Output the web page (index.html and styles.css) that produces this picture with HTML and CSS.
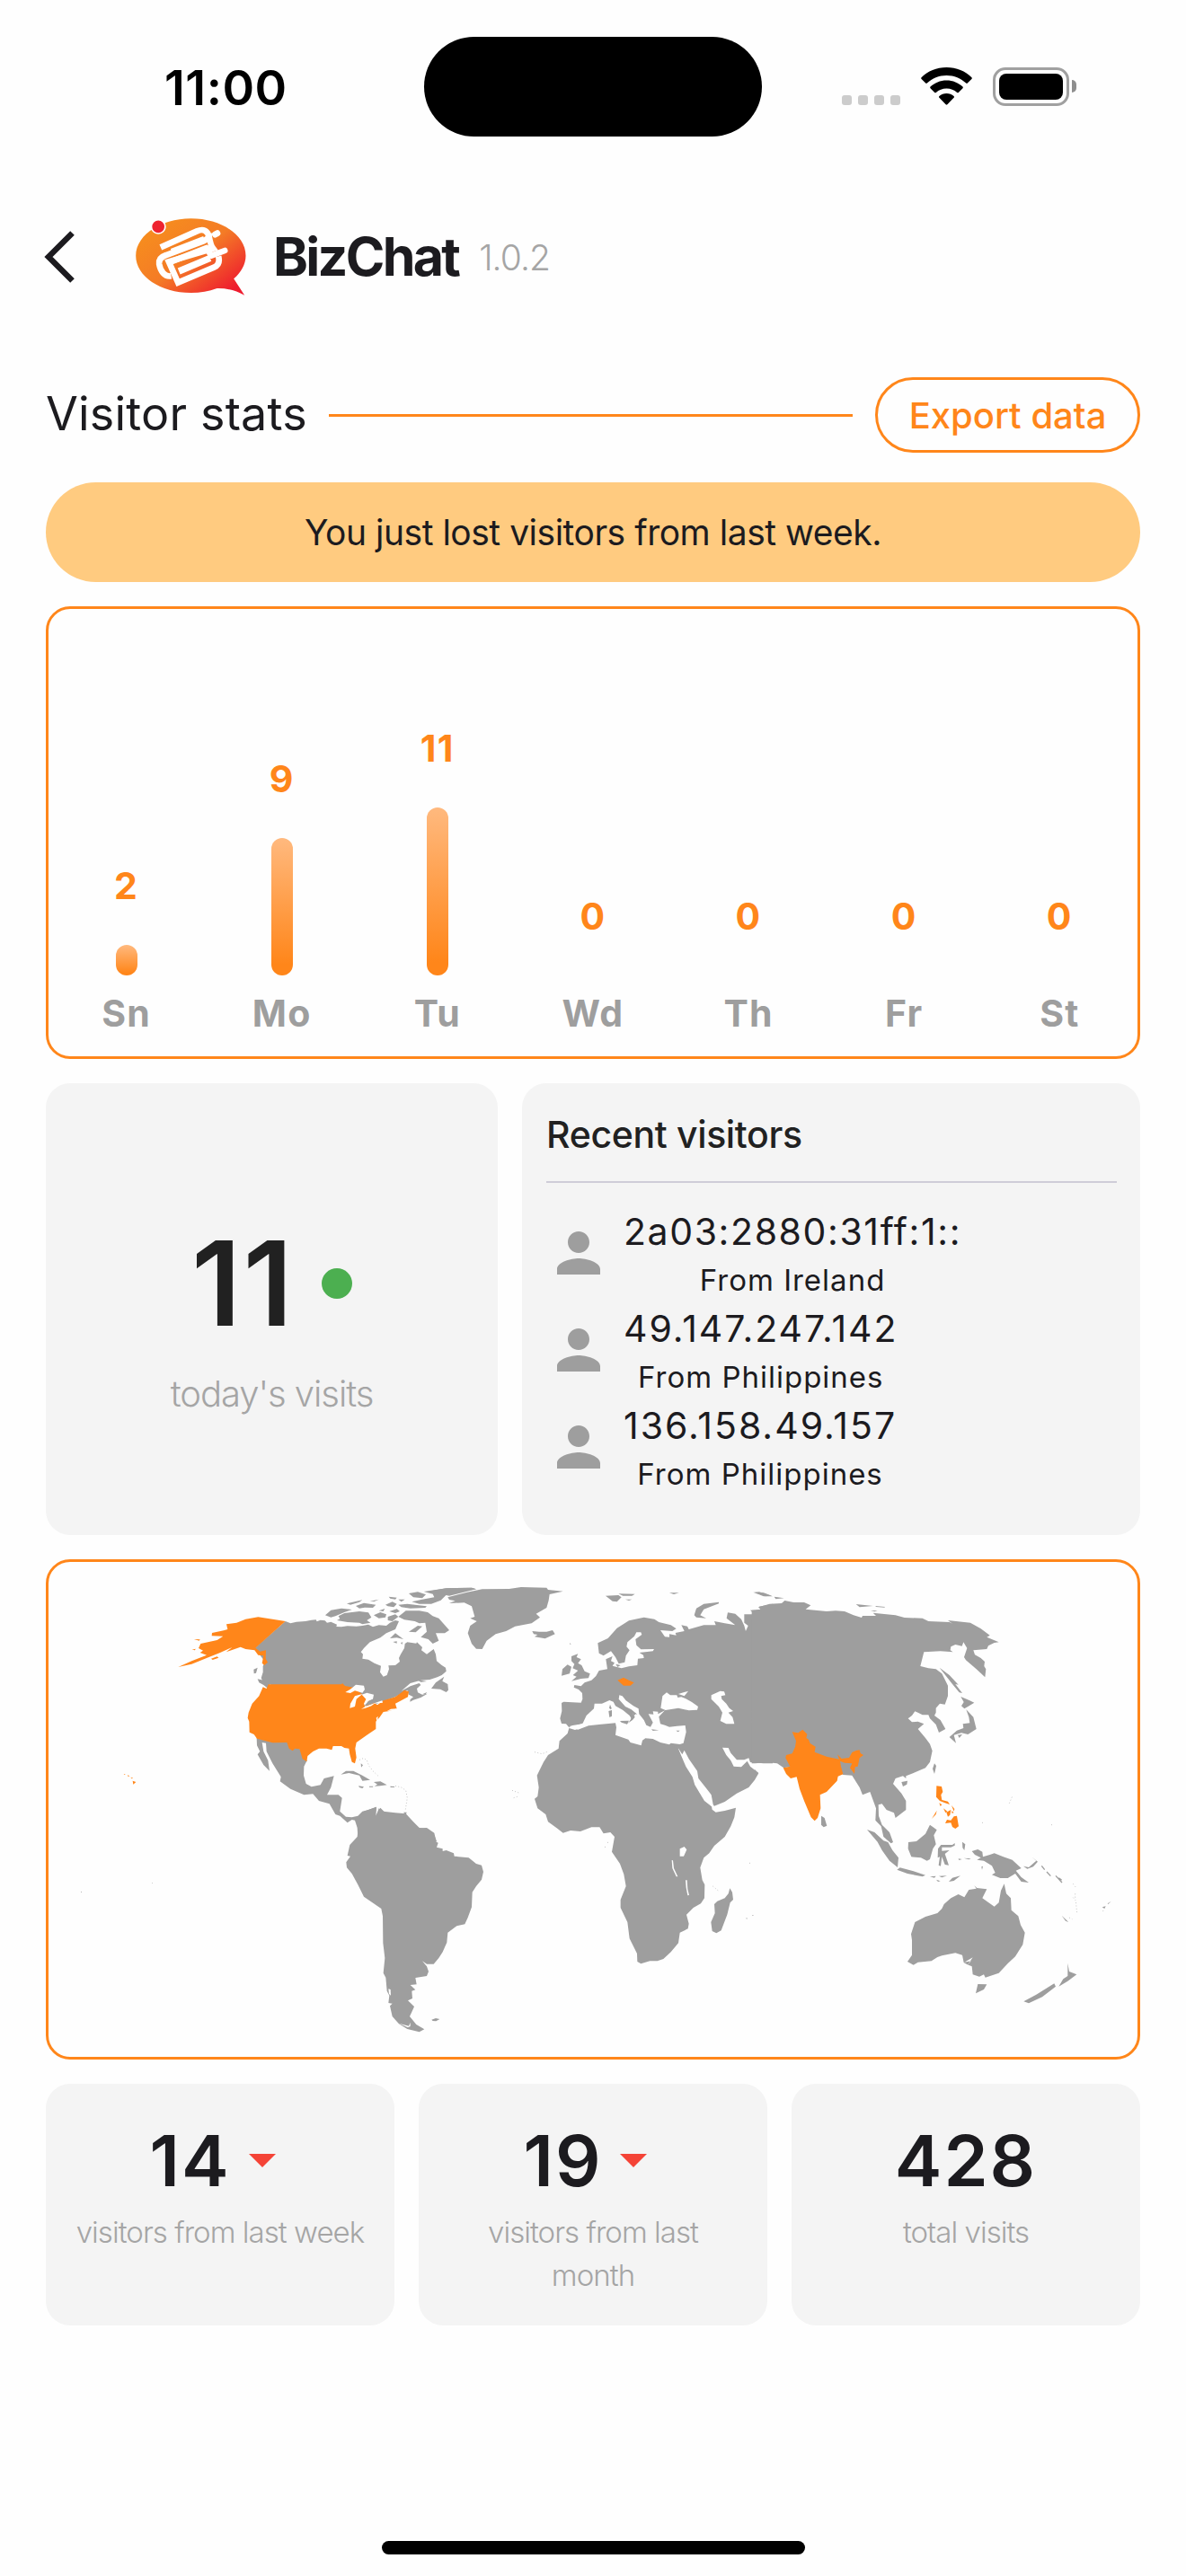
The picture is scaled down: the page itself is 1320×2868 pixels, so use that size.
FILE: index.html
```html
<!DOCTYPE html>
<html lang="en">
<head>
<meta charset="utf-8">
<title>BizChat – Visitor stats</title>
<link rel="stylesheet" href="styles.css">
</head>
<body>
<div class="status-bar">
  <div class="time">11:00</div>
  <div class="island"></div>
  <div class="indicators">
    <div class="signal"><i></i><i></i><i></i><i></i></div>
    <svg class="wifi" viewBox="0 0 57 42"><path d="M28.500 0C39.500 0 49.500 4.200 56.500 11.300Q57.200 12.200 56.400 13L51.800 17.600Q51 18.300 50.200 17.600C44.500 12.200 37 9 28.500 9S12.500 12.200 6.800 17.600Q6 18.300 5.200 17.600L.6 13Q-.2 12.200.5 11.300C7.500 4.200 17.500 0 28.500 0Z"/><path d="M28.500 14.500C35.500 14.500 41.800 17.200 46.500 21.600Q47.300 22.400 46.500 23.200L41.800 27.900Q41 28.600 40.200 27.900C37 25 33 23.400 28.500 23.400S20 25 16.800 27.900Q16 28.600 15.200 27.900L10.500 23.200Q9.700 22.400 10.500 21.600C15.200 17.200 21.500 14.500 28.500 14.500Z"/><path d="M28.500 29C31.600 29 34.500 30.200 36.600 32.100Q37.400 32.900 36.600 33.700L29.400 41.300Q28.500 42.200 27.600 41.300L20.400 33.700Q19.600 32.900 20.400 32.100C22.500 30.200 25.400 29 28.500 29Z"/></svg>
    <div class="battery"><div class="battery-shell"><div class="battery-level"></div></div><div class="battery-cap"></div></div>
  </div>
</div>

<header class="app-header">
  <svg class="back" viewBox="0 0 34 58"><path d="M31.500 2.500 5 29 31.500 55.500"/></svg>
  <svg class="logo" viewBox="64 69 368 258">
    <defs><linearGradient id="bubble" x1="0.15" y1="0.2" x2="0.9" y2="0.9"><stop offset="0" stop-color="#f68b1f"/><stop offset=".45" stop-color="#f47b26"/><stop offset="1" stop-color="#ee1c2e"/></linearGradient></defs>
    <path fill="url(#bubble)" d="M248 70C350 70 431 126 431 194C431 222 415 250 391 271C403 290 415 307 427 326C398 310 366 302 335 303C308 313 280 318 248 318C146 318 64 262 64 194S146 70 248 70Z"/>
    <g fill="none" stroke="#fff" stroke-width="20">
      <path d="M147 166 268 112Q300 98 309 132Q314 160 322 170L174 214 205 284 325 233Q347 224 340 196"/>
      <path d="M184 181 293 139" stroke-width="22"/>
      <path d="M182 262C160 266 146 245 142 222Q139 201 165 192L290 145Q312 136 309 120"/>
      <path d="M188 212 300 168 316 194 361 177" stroke-linejoin="round" stroke-linecap="round"/>
      <path d="M208 246 312 202" stroke-width="22"/>
      <path d="M329 123 336 119" stroke-width="21" stroke-linecap="round"/>
    </g>
    <circle cx="139" cy="97" r="23" fill="#ee2330" stroke="#fefefe" stroke-width="5"/>
  </svg>
  <h1>BizChat</h1>
  <span class="version">1.0.2</span>
</header>

<main>
  <div class="section-head">
    <h2>Visitor stats</h2>
    <div class="rule"></div>
    <button class="export">Export data</button>
  </div>
  <div class="notice"><span>You just lost visitors from last week.</span></div>

  <section class="chart outlined">
    <div class="day"><b>2</b><div class="bar" style="height:34px"></div><span>Sn</span></div>
    <div class="day"><b>9</b><div class="bar" style="height:153px"></div><span>Mo</span></div>
    <div class="day"><b>11</b><div class="bar" style="height:187px"></div><span>Tu</span></div>
    <div class="day"><b>0</b><div class="bar" style="height:0"></div><span>Wd</span></div>
    <div class="day"><b>0</b><div class="bar" style="height:0"></div><span>Th</span></div>
    <div class="day"><b>0</b><div class="bar" style="height:0"></div><span>Fr</span></div>
    <div class="day"><b>0</b><div class="bar" style="height:0"></div><span>St</span></div>
  </section>

  <div class="overview">
    <section class="card today">
      <div class="today-row"><strong>11</strong><i class="live"></i></div>
      <p>today's visits</p>
    </section>
    <section class="card recent">
      <h3>Recent visitors</h3>
      <ul>
        <li><svg viewBox="0 0 24 24"><path d="M12 12c2.210 0 4-1.790 4-4s-1.790-4-4-4-4 1.790-4 4 1.790 4 4 4zm0 2c-2.670 0-8 1.340-8 4v2h16v-2c0-2.660-5.330-4-8-4z"/></svg><div><span class="ip ip-wide">2a03:2880:31ff:1::</span><span class="from">From Ireland</span></div></li>
        <li><svg viewBox="0 0 24 24"><path d="M12 12c2.210 0 4-1.790 4-4s-1.790-4-4-4-4 1.790-4 4 1.790 4 4 4zm0 2c-2.670 0-8 1.340-8 4v2h16v-2c0-2.660-5.330-4-8-4z"/></svg><div><span class="ip">49.147.247.142</span><span class="from">From Philippines</span></div></li>
        <li><svg viewBox="0 0 24 24"><path d="M12 12c2.210 0 4-1.790 4-4s-1.790-4-4-4-4 1.790-4 4 1.790 4 4 4zm0 2c-2.670 0-8 1.340-8 4v2h16v-2c0-2.660-5.330-4-8-4z"/></svg><div><span class="ip">136.158.49.157</span><span class="from">From Philippines</span></div></li>
      </ul>
    </section>
  </div>

  <section class="map outlined">
    <svg viewBox="54 1739 1212 551">
      <!-- North America -->
      <g transform="translate(240 1750) scale(.33333)">
        <path class="land" d="M233 165 250 172 270 167 300 165 320 161 335 160 338 166 350 161 365 163 372 170 385 167 405 176 403 183 420 184 440 181 470 182 490 180 510 176 525 184 545 178 570 180 582 170 600 162 612 165 600 192 570 205 550 220 515 235 495 255 485 268 492 275 490 290 510 293 530 305 552 314 549 335 560 350 572 345 579 325 577 313 600 312 615 300 612 288 618 275 630 255 632 240 640 235 670 239 672 235 690 252 687 262 705 275 728 258 735 275 738 298 755 312 768 320 770 332 755 345 740 352 715 360 685 362 650 372 620 398 650 382 680 372 685 378 672 390 675 403 690 410 707 407 685 420 660 428 649 434 650 426 660 418 645 410 640 395 600 418 560 432 495 458 480 470 300 420 180 376 176 392 160 370 152 355 158 335 158 315 165 300 130 255Z"/>
        <path class="land" d="M366 145 385 128 420 122 455 126 430 135 400 148 385 152ZM410 148 430 138 480 132 510 136 520 152 505 162 517 170 490 175 480 170 440 168 405 162 415 157ZM438 106 490 94 480 101 450 110ZM468 114 495 104 535 110 525 120 498 119 480 122ZM515 98 545 92 530 99ZM578 83 605 86 600 92 583 89ZM610 92 632 92 620 100ZM645 72 675 67 702 76 690 88 660 85ZM695 66 770 55 855 53 870 58 820 67 770 77 752 95 720 107 680 107 655 100 690 92 730 85 725 74ZM528 145 550 135 570 142 567 152 545 155ZM567 110 590 100 605 107 595 118 575 115ZM610 110 640 107 705 115 700 120 650 122 620 118ZM580 132 605 124 615 132 600 138ZM575 150 600 142 610 150 590 165 575 162ZM545 130 565 123 560 132Z"/>
        <path class="land" d="M610 150 635 130 680 130 708 135 725 148 745 155 765 178 780 195 765 205 735 205 745 230 725 240 710 225 685 218 705 200 700 170 680 172 665 165 630 160ZM582 222 600 205 610 212 627 225 605 220ZM592 234 605 232 605 239ZM618 237 625 235 622 243ZM645 200 675 180 690 182 668 202ZM720 390 735 370 763 350 757 365 775 375 777 395 770 402 750 392ZM672 360 705 366 685 368ZM692 408 706 402 700 410ZM140 358 160 362 176 382 172 388 160 378 145 370ZM127 326 140 320 135 338 128 340Z"/>
        <path class="land" d="M137 555 180 560 240 568 280 590 305 630 295 650 294 680 302 708 320 718 350 712 362 690 395 682 385 720 372 745 410 745 422 755 415 800 435 818 455 820 475 815 490 800 510 795 537 785 535 818 545 790 560 800 600 805 635 808 660 835 680 855 710 860 730 880 738 900 465 900 475 885 473 855 465 830 455 828 440 838 415 815 400 810 380 775 345 765 325 742 295 745 250 725 215 700 218 685 190 640 170 600 168 572 155 570 160 600 175 630 180 665 160 645 140 610 148 600 138 580Z"/>
        <path class="land" d="M418 677 435 665 460 665 490 680 516 695 490 698 480 680 445 672ZM528 702 550 700 572 712 550 715 530 716 540 710ZM477 715 495 718 490 723 480 720ZM513 716 526 716 525 719 513 719ZM583 716 598 717 596 720 584 720ZM485 640 492 646 486 653ZM627 803 638 803 635 812Z"/>
        <path class="specks" d="M480 628 495 622 505 630 512 648 525 665 543 682M600 715 620 720 635 730 640 755 636 780 633 800"/>
        <path class="hit" d="M176 376H418L424 373 432 381 460 386 480 402 540 445 560 430 600 418 622 402 630 395 645 400 642 418 600 440 605 457 580 465 560 468 548 485 535 500 535 525 505 545 470 570 466 590 470 620 465 640 455 635 448 610 445 590 430 588 420 582 392 582 388 595 370 590 345 590 325 600 307 615 304 634 290 625 280 592 265 590 257 598 245 590 238 570 190 571 138 557 128 543 113 536 112 500 107 488 110 470 122 440 145 415 158 385 170 390Z"/>
        <path class="sea" d="M433 402 450 392 468 377 495 380 498 393 490 404 465 397 450 405ZM448 455 450 440 465 415 490 408 470 425 465 450ZM488 410 505 404 528 410 525 425 510 432 500 452 495 440 502 425ZM486 458 500 450 525 440 556 430 558 437 530 440 520 448 500 455ZM536 488 542 482 540 505ZM572 465 585 458 605 457 600 463Z"/>
        <path class="land" d="M495 449 510 432 525 425 540 433 520 442Z"/>
      </g>
      <!-- Alaska and Hawaii -->
      <g class="hit" transform="translate(40 1730) scale(.33333)">
        <path d="M636 235 670 230 700 218 742 211 790 218 833 225 733 314 748 326 768 322 767 350 774 362 763 372 755 365 760 340 742 338 730 322 700 318 683 311 635 328 655 312 615 330 570 348 520 368 475 378 520 358 570 338 548 330 558 323 543 315 550 300 605 288 625 275 587 274 588 264 627 256 640 252ZM585 350 605 343 610 347 590 354ZM528 285 548 286 545 290ZM521 320 533 317 531 322ZM323 758 334 762 325 770ZM306 739 313 742 308 744ZM316 746 325 749 320 751ZM293 735 299 736 296 738Z"/>
      </g>
      <!-- South America -->
      <g transform="translate(300 1980) scale(.33333)">
        <path class="land" d="M285 132 300 135 315 110 357 95 352 128 370 98 385 113 415 118 455 120 478 145 500 166 525 165 550 182 557 212 563 215 558 230 578 235 578 243 590 240 615 250 617 260 665 265 690 285 708 290 714 312 708 338 690 360 677 380 675 430 662 465 652 487 625 493 595 515 592 548 578 580 565 600 548 620 525 620 510 610 525 628 531 645 525 660 487 666 491 688 470 690 487 706 475 710 477 735 462 742 483 762 475 780 468 795 490 822 517 838 500 847 460 837 432 820 410 795 402 760 410 752 397 750 400 725 392 710 388 665 380 650 385 600 379 550 378 460 373 435 315 395 295 355 275 318 258 298 256 280 270 260 260 258 268 222 293 195 297 160Z"/>
        <path class="sea" d="M397 703 404 705 405 725 399 720ZM432 818 465 827 470 815 470 828 462 832Z"/>
        <path class="land" d="M541 806 555 801 568 804 556 811 545 810Z"/>
        <path class="specks" d="M810 40 832 48M815 65 830 60"/>
      </g>
      <!-- Africa -->
      <g class="land" transform="translate(580 1880) scale(.33333)">
        <path d="M160 132 180 138 225 122 300 105 560 120 540 185 525 200 550 250 575 290 595 345 636 393 638 404 650 413 680 408 717 398 712 430 700 460 680 495 645 525 628 550 610 565 598 598 605 640 613 655 612 700 600 718 575 732 552 755 560 785 557 802 530 815 525 850 500 880 475 903 455 910 430 910 400 919 388 912 387 885 362 835 355 780 332 732 332 705 350 660 343 620 330 585 303 545 312 495 298 480 275 484 262 463 235 463 198 477 165 474 140 482 118 465 90 445 82 420 55 400 45 368 55 360 59 330 53 290 75 245 90 222 125 200 128 175 155 150Z"/>
        <path d="M697 667 705 680 708 705 698 715 688 755 668 808 652 817 638 810 634 780 647 750 645 720 655 710 680 700 692 685ZM751 766 756 767 753 770ZM771 757 776 756 774 760Z"/>
      </g>
      <!-- Europe, western Asia, Greenland -->
      <g transform="translate(500 1750) scale(.33333)">
        <path class="land" d="M375 438 382 434 440 437 445 425 444 405 432 393 416 386 418 378 440 382 452 370 475 362 490 348 500 330 528 325 523 292 545 282 540 298 552 304 545 314 575 322 600 316 628 312 630 290 650 288 648 278 635 270 680 265 684 258 640 259 625 245 622 225 643 210 640 202 625 202 618 215 595 235 592 250 602 262 590 280 586 302 566 307 555 285 540 265 515 280 500 272 496 238 530 222 560 188 600 163 650 152 685 158 700 168 740 178 758 190 745 198 705 195 720 217 735 218 735 208 758 212 755 204 785 198 775 178 795 182 800 192 850 178 890 178 885 165 920 172 955 178 926 155 930 136 955 140 975 158 985 180 990 198 998 180 985 170 985 142 1020 142 1005 128 1040 128 1035 116 1080 107V640H1050L1005 636 1000 622 985 628 960 628 940 605 932 588 912 587 925 612 940 630 950 650 975 652 995 632 1005 650 1033 672 1020 695 1000 720 960 740 920 768 885 782 840 735 765 590 700 565 560 512 450 505 435 510 400 520 390 508 375 507 370 490 376 465Z"/>
        <path class="sea" d="M400 517 412 513 445 508 458 480 483 457 485 440 510 440 535 429 548 434 555 448 580 462 602 480 608 490 600 502 590 510 612 495 620 485 613 473 628 476 608 460 588 450 566 425 568 412 578 415 590 430 615 448 632 457 634 475 650 495 658 512 672 518 680 503 665 475 682 476 680 466 697 467 697 475 720 463 700 484 705 508 720 512 735 518 760 515 788 513 791 535 782 572 770 576 740 572 735 577 705 570 680 558 655 556 645 563 641 580 605 570 598 560 555 545 558 520 555 505 500 510 465 514 430 527Z"/>
        <path class="sea" d="M726 403 712 415 706 455 722 462 765 455 800 463 828 461 831 450 810 435 790 424 775 418 763 420 760 412 738 412ZM765 408 798 398 785 415ZM905 398 875 412 875 425 900 450 912 470 905 498 925 508 952 508 946 485 932 470 948 465 935 455 925 440 910 425 908 415 922 412 918 400ZM764 588 778 610 785 596 800 625 828 665 832 690 860 725 875 745 882 782 878 785 852 765 820 712 812 685 790 650 775 615Z"/>
        <path class="land" d="M537 443 542 455 540 460 534 455ZM532 465 543 462 543 482 535 486ZM570 498 600 497 594 509 575 503ZM675 526 700 529 680 531ZM757 530 770 530 764 535ZM608 487 617 480 612 473 624 472 605 497ZM556 308 562 318 572 312Z"/>
        <path class="land" d="M408 282 430 274 425 285 440 292 430 305 442 312 452 332 470 340 465 355 440 357 408 365 425 350 413 345 430 330 412 322 418 308 408 298ZM378 325 395 310 408 317 402 340 375 347ZM277 198 300 200 325 200 345 195 353 208 320 223 285 217 295 210 282 208ZM402 237 407 242 403 242Z"/>
        <path class="land" d="M-5 85 60 68 110 58 200 57 240 51 325 53 330 60 380 65 335 75 332 95 325 120 290 140 303 152 275 172 220 182 190 198 155 208 125 230 110 258 90 257 75 240 62 205 70 180 92 165 70 155 85 150 75 115 50 103 0 105 20 97 0 93ZM-70 65-10 55 75 53 90 58 0 80ZM522 80 565 78 575 85 560 100 545 98ZM565 73 620 74 610 80 580 80ZM588 92 610 92 600 96ZM735 70 767 70 750 75ZM818 145 825 122 850 107 900 101 900 106 850 125 838 145 858 155 825 152ZM1015 68 1050 70 1077 80 1050 82Z"/>
        <path class="hit" d="M562 362 582 353 600 362 617 370 605 380 582 380Z"/>
      </g>
      <!-- East Asia -->
      <g transform="translate(840 1750) scale(.33333)">
        <path class="land" d="M-10 128 20 125 12 118 50 107 90 105 100 96 130 102 165 102 187 112 170 125 240 132 270 130 300 132 330 145 357 153 360 147 405 147 395 137 470 145 500 153 560 155 580 165 650 168 660 173 645 162 720 170 755 190 785 212 775 218 815 235 800 237 780 247 775 258 730 262 735 277 755 288 768 300 766 315 772 325 769 352 740 325 705 295 699 285 709 255 697 235 692 248 670 243 655 250 653 262 662 268 620 265 565 268 553 315 580 322 605 325 625 340 645 380 645 415 635 443 618 440 605 455 605 470 600 480 620 495 637 525 615 537 605 510 585 490 580 478 560 478 545 470 535 466 525 480 512 490 525 502 545 500 565 508 545 525 570 555 585 575 593 598 585 635 570 655 535 670 505 682 505 690 495 682 470 690 462 708 490 740 505 765 505 795 470 822 465 805 440 795 425 775 413 778 414 815 425 845 450 870 462 903 455 907 430 885 422 850 403 830 405 790 385 735 360 745 350 720 325 680 295 678 260 640 120 650 97 655 75 640 45 637 0 640-10 640Z"/>
        <path class="land" d="M0 68 15 67 60 82 35 82ZM65 83 98 88 70 91ZM338 108 395 114 350 118ZM403 114 435 117 433 119 405 117ZM387 129 410 130 400 133ZM617 320 650 345 680 377 670 375 693 405 683 403 660 375ZM688 417 718 430 733 437 712 450 700 457 690 448 698 435ZM706 460 730 485 740 525 712 543 690 538 665 545 672 572 650 552 675 530 697 522 695 508 718 505 715 485ZM678 545 693 543 683 555ZM600 640 606 648 600 675 594 658ZM490 702 510 698 508 710 495 717ZM222 815 233 822 241 848 230 853 222 845Z"/>
        <path class="land" d="M0 660 12 673 0 692Z"/>
        <path class="hit" d="M125 535 145 538 160 527 175 542 172 555 180 560 185 573 203 584 200 602 240 617 282 626 276 610 290 624 315 621 325 603 338 597 350 595 353 606 363 612 350 622 344 650 335 652 333 675 318 655 325 640 300 638 285 632 288 650 295 676 278 683 275 698 240 735 218 745 220 790 210 822 200 832 188 820 165 765 150 725 140 685 120 690 105 675 95 655 118 650 103 622 105 612 125 607 135 585 138 565Z"/>
        <path class="hit" d="M607 715 624 717 628 735 622 745 625 762 645 767 651 777 635 772 618 765 606 752ZM616 772 625 778 620 783ZM591 825 608 797 605 810ZM657 780 667 792 665 800ZM630 790 643 800 637 805ZM640 803 655 795 652 812 645 818ZM658 798 665 805 658 806ZM636 840 642 828 655 830 665 817 675 815 681 850 670 858 660 852 655 838Z"/>
        <path class="specks" d="M850 773 860 750M759 838H763M990 845H996"/>
      </g>
      <!-- Oceania -->
      <g transform="translate(840 1980) scale(.33333)">
        <path class="land" d="M733 358 742 366 775 370 760 400 800 428 815 415 822 375 833 352 840 385 855 400 857 440 880 460 888 490 902 515 895 555 870 595 845 618 815 650 770 665 765 655 750 662 728 655 725 628 710 622 698 615 693 590 670 583 625 592 610 597 590 610 545 614 530 623 510 612 525 590 525 540 522 520 535 480 570 462 610 450 625 435 632 420 655 400 680 387 700 397 715 372 740 368ZM745 687 775 688 765 705 738 718ZM1045 617 1050 645 1075 655 1045 677 1015 695 1030 670 1045 660ZM898 745 940 722 1000 685 1005 695 960 730 915 751Z"/>
        <path class="land" d="M375 171 400 180 430 208 445 213 460 240 480 265 477 297 450 275 425 240 410 212ZM475 305 485 298 530 310 570 323 560 328 510 318ZM513 213 540 210 570 185 585 155 608 172 598 190 605 220 595 235 585 270 575 275 555 265 523 262 512 235ZM611 265 612 235 622 222 660 222 668 216 668 224 655 230 625 230 625 242 650 240 635 252 648 290 635 288 625 262 621 293 614 290 618 262ZM693 212 703 220 700 240 694 232ZM725 243 745 237 760 245 762 262 785 255 800 250 830 262 860 272 890 300 872 308 890 330 915 348 890 345 870 318 845 333 820 333 792 322 803 315 792 292 765 275 742 272 755 265 735 255ZM585 328 605 326 600 332ZM615 326 642 325 625 331ZM606 338 620 343 612 345ZM648 345 660 332 687 325 665 342ZM680 268 692 270 682 273ZM698 266 722 268 715 271ZM757 295 762 293 759 305ZM897 293 915 297 940 275 925 262 945 278 930 295 910 302ZM1025 458 1048 480 1038 476ZM1160 430 1172 427 1168 435ZM1178 418 1190 411 1180 420Z"/>
        <path class="sea" d="M700 614 728 598 708 628 722 610Z"/>
        <path class="islands" d="M958 292 968 305M975 312 988 326M1005 325 1026 348M1015 332 1025 340"/>
        <path class="specks" d="M1063 352 1073 365M1063 398 1072 408 1076 450M1070 385V405M1050 465 1060 470M1162 443 1168 440"/>
      </g>
      <g class="land" transform="translate(40 1980) scale(.33333)"><path d="M150 379H153V381H150ZM388 348H390V350H388Z"/></g>
      <!-- African lakes and small islands -->
      <g transform="translate(580 1880) scale(.33333)">
        <path class="sea" d="M530 535 545 528 553 538 543 560 530 560ZM503 573 507 574 510 600 523 628 518 628 505 600ZM549 640 554 640 556 670 561 690 556 691 551 665Z"/>
        <path class="specks" d="M45 212 70 218 90 210M640 660 658 675M279 529H282M288 514H291M762 583H765"/>
      </g>
    </svg>
  </section>

  <div class="totals">
    <section class="card total"><div class="trend"><strong>14</strong><i class="down"></i></div><p>visitors from last week</p></section>
    <section class="card total"><div class="trend"><strong>19</strong><i class="down"></i></div><p>visitors from last month</p></section>
    <section class="card total"><div><strong>428</strong></div><p>total visits</p></section>
  </div>
</main>
<footer><div class="home-indicator"></div></footer>
</body>
</html>
```
FILE: styles.css
```css
* { box-sizing: border-box; }
body {
  margin: 0;
  width: 1320px;
  height: 2868px;
  display: flex;
  flex-direction: column;
  background: #fefefe;
  color: #1c1b1f;
  font-family: Inter, "Liberation Sans", sans-serif;
  font-weight: 400;
}
h1, h2, h3, p, ul { margin: 0; padding: 0; font-weight: 400; }
i { display: block; }

/* Status bar */
.status-bar {
  height: 192px;
  display: grid;
  grid-template-columns: 472px 376px 1fr;
  align-items: center;
  flex: none;
}
.time {
  padding: 3px 0 0 183px;
  color: #000;
  font-size: 54px;
  font-weight: 600;
  letter-spacing: 0.5px;
}
.island { height: 111px; border-radius: 56px; background: #000; }
.indicators { display: flex; align-items: center; padding-left: 89px; }
.signal { display: flex; gap: 7px; padding-top: 31px; }
.signal i { width: 11px; height: 11px; border-radius: 3px; background: #ccc; }
.wifi { width: 57px; height: 42px; margin-left: 23px; }
.battery { display: flex; align-items: center; gap: 3px; margin-left: 23px; }
.battery-shell {
  width: 85px;
  height: 43px;
  padding: 4px;
  border: 3px solid #a0a0a0;
  border-radius: 14px;
}
.battery-level { height: 100%; border-radius: 8px; background: #000; }
.battery-cap { width: 5px; height: 14px; border-radius: 0 5px 5px 0; background: #8e8e8e; }

/* App header */
.app-header { height: 188px; display: flex; align-items: center; flex: none; padding-left: 49px; }
.back { width: 34px; height: 58px; fill: none; stroke: #1c1b1f; stroke-width: 6.500; }
.logo { width: 123px; height: 86px; margin-left: 68px; }
h1 { margin-left: 30px; font-size: 59px; font-weight: 700; letter-spacing: -2.700px; line-height: 80px; }
.version { margin-left: 23px; font-size: 39px; font-weight: 300; letter-spacing: -0.900px; color: #a5a5a5; }

/* Content */
main { display: flex; flex-direction: column; gap: 27px; padding: 40px 51px 0; }
.section-head { height: 84px; display: flex; align-items: center; margin-bottom: 6px; }
h2 { width: 290px; white-space: nowrap; font-size: 52px; line-height: 64px; padding-bottom: 2px; letter-spacing: 0.200px; }
.rule { flex: 1; height: 3px; margin: 0 25px; background: #ff861a; }
.export {
  width: 295px;
  height: 84px;
  padding: 0;
  border: 3px solid #ff861a;
  border-radius: 42px;
  background: none;
  color: #ff861a;
  font: 500 40px Inter, "Liberation Sans", sans-serif;
}
.notice {
  height: 111px;
  display: flex;
  align-items: center;
  justify-content: center;
  border-radius: 56px;
  background: #ffcb80;
  font-size: 39px;
  letter-spacing: -0.480px;
}
.outlined { border: 3px solid #ff861a; border-radius: 27px; }

.chart { height: 504px; display: grid; grid-template-columns: repeat(7, 1fr); padding-bottom: 23px; }
.day {
  display: flex;
  flex-direction: column;
  align-items: center;
  justify-content: flex-end;
  font-size: 41px;
  line-height: 50px;
}
.day b { margin-bottom: 41px; color: #ff861a; font-weight: 700; letter-spacing: 1.500px; }
.day span { margin-top: 17px; color: #9e9e9e; font-weight: 700; letter-spacing: 1.200px; }
.bar { width: 24px; border-radius: 12px; background: linear-gradient(#ffb97e, #ff861a 92%); }

.overview { height: 503px; display: grid; grid-template-columns: 503px 688px; gap: 27px; }
.card { border-radius: 27px; background: #f4f4f4; }
.today { padding-top: 158px; text-align: center; }
.today-row {
  height: 130px;
  display: flex;
  align-items: center;
  justify-content: center;
  gap: 30px;
  color: #212121;
}
.today-row strong { font-size: 131px; line-height: 130px; font-weight: 600; letter-spacing: 2px; }
.live { width: 34px; height: 34px; border-radius: 50%; background: #4caf50; }
.today p { margin-top: 28px; font-size: 40px; line-height: 60px; font-weight: 300; letter-spacing: -1.050px; color: #a5a5a5; }

.recent { padding: 27px 26px 0 27px; }
h3 {
  height: 84px;
  margin-bottom: 27px;
  border-bottom: 2px solid #cfccd8;
  font-size: 41px;
  line-height: 60px;
  font-weight: 500;
  letter-spacing: -0.350px;
  color: #212121;
}
.recent li { height: 108px; display: flex; align-items: center; gap: 14px; }
.recent svg { width: 72px; height: 72px; margin-bottom: 7px; fill: #9e9e9e; }
.recent li div { display: flex; flex-direction: column; align-items: center; }
.recent li span { line-height: 54px; }
.ip { font-size: 41px; letter-spacing: 2px; }
.ip-wide { letter-spacing: 1.600px; }
.from { font-size: 33px; letter-spacing: 1px; }

/* World map */
.map { height: 557px; }
.map svg { display: block; width: 1212px; height: 551px; }
.land { fill: #9e9e9e; }
.hit { fill: #ff861a; }
.sea { fill: #fefefe; }
.specks { fill: none; stroke: #9e9e9e; stroke-width: 1.800; stroke-dasharray: 3 7; }
.islands { fill: none; stroke: #9e9e9e; stroke-width: 4; }

.totals { height: 269px; display: grid; grid-template-columns: repeat(3, 1fr); gap: 27px; }
.total { padding: 40px 30px 0; text-align: center; }
.total div { height: 90px; display: flex; align-items: center; justify-content: center; gap: 20px; }
.total .trend { padding-right: 17px; }
.total strong { font-size: 79px; line-height: 90px; font-weight: 600; letter-spacing: 2px; }
.total p {
  max-width: 327px;
  margin: 11px auto 0;
  font-size: 33px;
  line-height: 48px;
  font-weight: 300;
  letter-spacing: -0.950px;
  color: #a5a5a5;
}
.down { border: 15px solid transparent; border-top-color: #f44336; border-bottom: 0; }

footer { margin-top: auto; padding-bottom: 24px; display: flex; justify-content: center; }
.home-indicator { width: 471px; height: 15px; border-radius: 8px; background: #000; }
```
